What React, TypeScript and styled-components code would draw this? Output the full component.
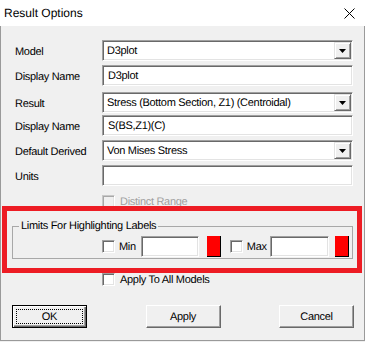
import styled, { createGlobalStyle } from "styled-components"

const GlobalStyle = createGlobalStyle`
  html, body {
    margin: 0;
    padding: 0;
    background: #f0f0f0;
  }
  body {
    font-family: "Liberation Sans", Arial, sans-serif;
    font-size: 11px;
    letter-spacing: -0.3px;
    text-rendering: geometricPrecision;
    color: #000;
  }
  * {
    box-sizing: border-box;
  }
`

const Arrow = () => (
  <svg width="7" height="4" viewBox="0 0 7 4">
    <path d="M0 0H7L3.5 4Z" fill="#000" />
  </svg>
)

const App = () => {
  return (
    <>
      <GlobalStyle />
      <Window>
        <TitleBar>
          <Title>Result Options</Title>
          <CloseIcon width="11" height="11" viewBox="0 0 11 11">
            <path d="M0.5 0.5L10.5 10.5M10.5 0.5L0.5 10.5" stroke="#000" strokeWidth="1" />
          </CloseIcon>
        </TitleBar>
        <Body>
          <FieldRow>
            <Label>Model</Label>
            <Combo>
              <ComboText>D3plot</ComboText>
              <DropButton>
                <Arrow />
              </DropButton>
            </Combo>
          </FieldRow>
          <FieldRow $top={4}>
            <Label>Display Name</Label>
            <TextBox>D3plot</TextBox>
          </FieldRow>
          <FieldRow $top={6}>
            <Label>Result</Label>
            <Combo>
              <ComboText>Stress (Bottom Section, Z1) (Centroidal)</ComboText>
              <DropButton>
                <Arrow />
              </DropButton>
            </Combo>
          </FieldRow>
          <FieldRow $top={2}>
            <Label>Display Name</Label>
            <TextBox>S(BS,Z1)(C)</TextBox>
          </FieldRow>
          <FieldRow $top={4}>
            <Label>Default Derived</Label>
            <Combo>
              <ComboText>Von Mises Stress</ComboText>
              <DropButton>
                <Arrow />
              </DropButton>
            </Combo>
          </FieldRow>
          <FieldRow $top={4}>
            <Label>Units</Label>
            <TextBox />
          </FieldRow>

          <CheckRow $top={9}>
            <Check $disabled />
            <CheckText $disabled>Distinct Range</CheckText>
          </CheckRow>

          <Spot>
            <GroupBox>
              <Legend>Limits For Highlighting Labels</Legend>
              <GroupRow>
                <Check />
                <InlineText $ml={4}>Min</InlineText>
                <SmallBox $ml={5} $w={58} />
                <Swatch $ml={8} />
                <Check $ml={9} />
                <InlineText $ml={4}>Max</InlineText>
                <SmallBox $ml={3} $w={59} />
                <Swatch $ml={6} />
              </GroupRow>
            </GroupBox>
            <Marker />
          </Spot>

          <CheckRow $top={14}>
            <Check />
            <CheckText>Apply To All Models</CheckText>
          </CheckRow>

          <ButtonRow>
            <Button $default>
              <Focus>OK</Focus>
            </Button>
            <Button>Apply</Button>
            <Button>Cancel</Button>
          </ButtonRow>
        </Body>
      </Window>
    </>
  )
}

export default App

const Window = styled.div`
  width: 365px;
  height: 341px;
  display: flex;
  flex-direction: column;
`

const TitleBar = styled.div`
  height: 26px;
  flex: none;
  background: #fff;
  display: flex;
  align-items: center;
  justify-content: space-between;
  padding: 0 10px 0 4px;
`

const Title = styled.div`
  font-size: 12px;
  letter-spacing: 0;
  color: #000;
`

const CloseIcon = styled.svg`
  display: block;
  margin-top: 1px;
`

const Body = styled.div`
  flex: 1;
  background: #f0f0f0;
  border-left: 1px solid #9a9a9a;
  border-right: 1px solid #9a9a9a;
  border-bottom: 1px solid #9a9a9a;
  padding: 14px 11px 0 14px;
  display: flex;
  flex-direction: column;
`

const FieldRow = styled.div<{ $top?: number }>`
  display: flex;
  align-items: center;
  height: 21px;
  margin-top: ${(p) => p.$top ?? 0}px;
`

const Label = styled.div`
  width: 87px;
  flex: none;
  white-space: nowrap;
  padding-top: 2px;
`

const sunken = `
  background: #fff;
  border-style: solid;
  border-width: 1px;
  border-color: #a0a0a0 #fff #fff #a0a0a0;
  box-shadow: inset 1px 1px 0 #696969, inset -1px -1px 0 #e3e3e3;
`

const Combo = styled.div`
  flex: 1;
  height: 21px;
  display: flex;
  align-items: center;
  padding: 1px;
  ${sunken}
`

const ComboText = styled.div`
  flex: 1;
  padding: 1px 0 0 3px;
  white-space: nowrap;
  overflow: hidden;
`

const DropButton = styled.div`
  width: 17px;
  height: 17px;
  flex: none;
  display: flex;
  align-items: center;
  justify-content: center;
  background: #f0f0f0;
  border-style: solid;
  border-width: 1px;
  border-color: #e3e3e3 #696969 #696969 #e3e3e3;
  box-shadow: inset 1px 1px 0 #fff, inset -1px -1px 0 #a0a0a0;

  svg {
    display: block;
    margin-top: 1px;
  }
`

const TextBox = styled.div`
  flex: 1;
  height: 21px;
  display: flex;
  align-items: center;
  padding: 1px 0 0 5px;
  ${sunken}
`

const CheckRow = styled.div<{ $top?: number }>`
  display: flex;
  align-items: center;
  height: 13px;
  padding-left: 87px;
  margin-top: ${(p) => p.$top ?? 0}px;
`

const Check = styled.div<{ $disabled?: boolean; $ml?: number }>`
  width: 13px;
  height: 13px;
  flex: none;
  margin-left: ${(p) => p.$ml ?? 0}px;
  background: ${(p) => (p.$disabled ? "#f0f0f0" : "#fff")};
  border-style: solid;
  border-width: 1px;
  border-color: ${(p) =>
    p.$disabled ? "#c8c8c8 #fff #fff #c8c8c8" : "#a0a0a0 #fff #fff #a0a0a0"};
  box-shadow: ${(p) =>
    p.$disabled
      ? "inset 1px 1px 0 #a8a8a8, inset -1px -1px 0 #e3e3e3"
      : "inset 1px 1px 0 #696969, inset -1px -1px 0 #e3e3e3"};
`

const CheckText = styled.div<{ $disabled?: boolean }>`
  margin-left: 5px;
  white-space: nowrap;
  color: ${(p) => (p.$disabled ? "#a0a0a0" : "#000")};
`

const Spot = styled.div`
  position: relative;
  margin: 12px 0 0 -3px;
`

const GroupBox = styled.fieldset`
  margin: 0;
  padding: 0 0 1px 0;
  border: 1px solid #a8a8a8;
  min-width: 0;
`

const Legend = styled.legend`
  margin-left: 6px;
  padding: 0 2px;
  line-height: 13px;
`

const GroupRow = styled.div`
  display: flex;
  align-items: center;
  height: 21px;
  margin-top: 3px;
  padding-left: 89px;
`

const InlineText = styled.div<{ $ml?: number }>`
  margin-left: ${(p) => p.$ml ?? 0}px;
  white-space: nowrap;
`

const SmallBox = styled.div<{ $ml?: number; $w: number }>`
  width: ${(p) => p.$w}px;
  height: 21px;
  flex: none;
  margin-left: ${(p) => p.$ml ?? 0}px;
  ${sunken}
`

const Swatch = styled.div<{ $ml?: number }>`
  width: 14px;
  height: 21px;
  flex: none;
  margin-left: ${(p) => p.$ml ?? 0}px;
  background: #ff0000;
  box-shadow: inset -1px -1px 0 #000;
`

/* red annotation drawn over the dialog */
const Marker = styled.div`
  position: absolute;
  top: -14px;
  left: -10px;
  right: -9px;
  bottom: -14px;
  border: 5px solid #ed1c24;
  pointer-events: none;
`

const ButtonRow = styled.div`
  display: flex;
  justify-content: space-between;
  margin: 19px -1px 0 -3px;
`

const Button = styled.div<{ $default?: boolean }>`
  width: 75px;
  height: 23px;
  display: flex;
  align-items: center;
  justify-content: center;
  background: #f0f0f0;
  border-style: solid;
  border-width: 1px;
  border-color: ${(p) => (p.$default ? "#000" : "#fff #696969 #696969 #fff")};
  box-shadow: ${(p) =>
    p.$default
      ? "inset 1px 1px 0 #fff, inset -1px -1px 0 #696969, inset -2px -2px 0 #a0a0a0"
      : "inset -1px -1px 0 #a0a0a0"};
  padding: 3px;
`

const Focus = styled.div`
  width: 100%;
  height: 100%;
  display: flex;
  align-items: center;
  justify-content: center;
  border: 1px dotted #000;
`
